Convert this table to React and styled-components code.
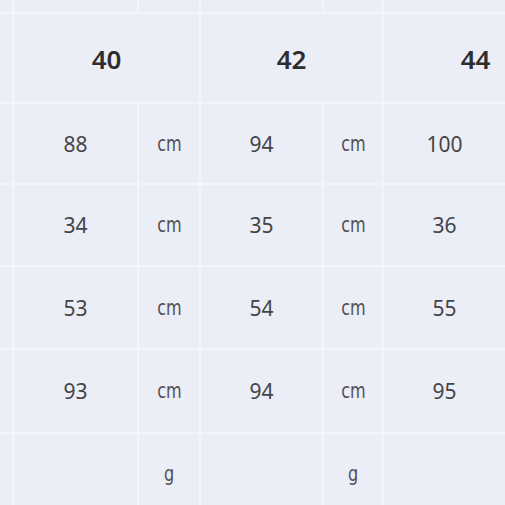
import React from "react";
import styled, { createGlobalStyle } from "styled-components";

const Global = createGlobalStyle`
  html, body { margin: 0; padding: 0; background: #f4f5fb; overflow: hidden; }
  body { width: 505px; height: 505px; }
`;

const Frame = styled.div`
  width: 505px;
  height: 505px;
  overflow: hidden;
`;

const Table = styled.div`
  display: grid;
  grid-template-columns: 12px 123px 60px 121px 58px 121px 60px;
  grid-template-rows: 12px 88px 79px 80px 81px 82px 80px;
  gap: 2px;
  background: #f4f5fb;
  width: max-content;
`;

const Cell = styled.div`
  background: #ebedf7;
  display: flex;
  align-items: center;
  justify-content: center;
  grid-column: ${(p) => (p.$span ? `span ${p.$span}` : "auto")};
`;

const Head = styled(Cell)`
  font-family: "Noto Sans", "Open Sans", sans-serif;
  font-size: 26px;
  font-weight: 600;
  color: #2e2e30;
  padding-top: 2px;
`;

const Value = styled(Cell)`
  font-family: "Noto Sans", "Open Sans", sans-serif;
  font-size: 21px;
  color: #454548;
`;

const Unit = styled(Cell)`
  font-family: "Liberation Sans Narrow", "DejaVu Sans Condensed", sans-serif;
  font-size: 21px;
  color: #515155;
  span { display: inline-block; transform: scaleX(0.85); }
`;

const rows = [
  ["88", "94", "100"],
  ["34", "35", "36"],
  ["53", "54", "55"],
  ["93", "94", "95"],
];

export default function App() {
  return (
    <>
      <Global />
      <Frame>
        <Table>
          {Array.from({ length: 7 }).map((_, i) => (
            <Cell key={"t" + i} />
          ))}
          <Cell />
          <Head $span={2}>40</Head>
          <Head $span={2}>42</Head>
          <Head $span={2}>44</Head>
          {rows.map((r, ri) => (
            <React.Fragment key={ri}>
              <Cell />
              <Value>{r[0]}</Value>
              <Unit><span>cm</span></Unit>
              <Value>{r[1]}</Value>
              <Unit><span>cm</span></Unit>
              <Value>{r[2]}</Value>
              <Unit />
            </React.Fragment>
          ))}
          <Cell />
          <Value />
          <Unit><span>g</span></Unit>
          <Value />
          <Unit><span>g</span></Unit>
          <Value />
          <Unit />
        </Table>
      </Frame>
    </>
  );
}
